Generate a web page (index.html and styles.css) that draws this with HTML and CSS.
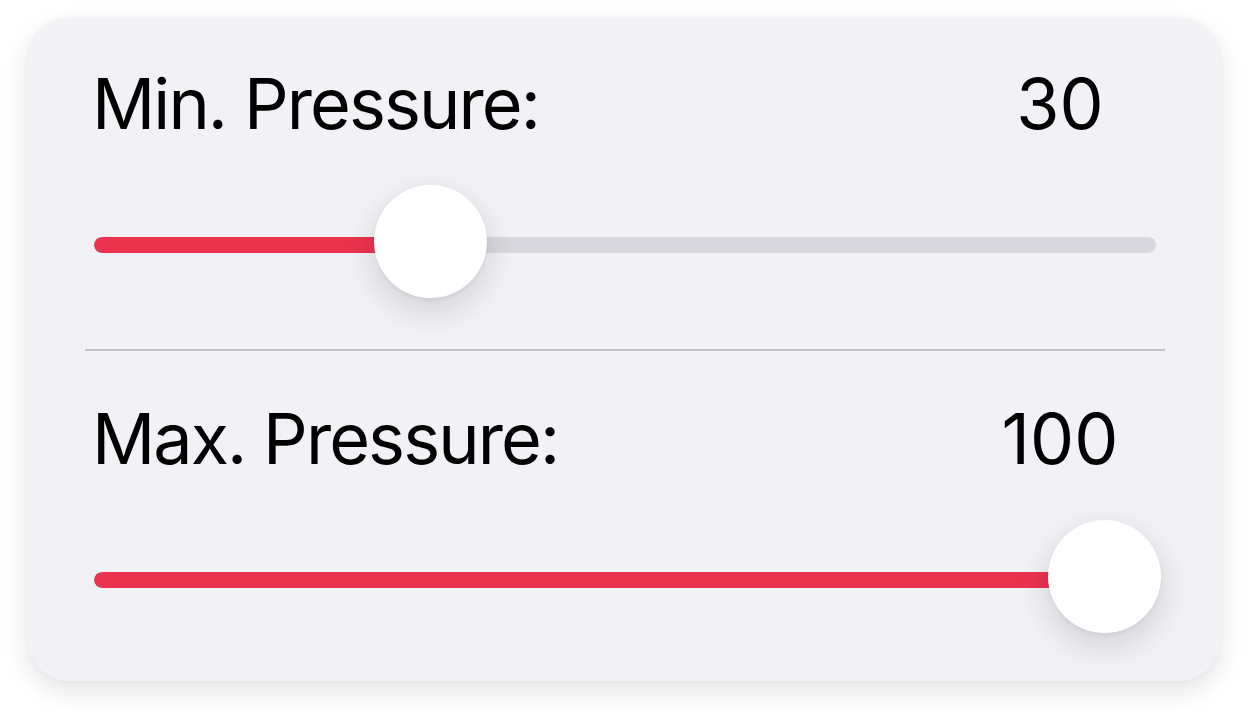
FILE: index.html
```html
<!DOCTYPE html>
<html>
<head>
<meta charset="utf-8">
<link rel="stylesheet" href="styles.css">
</head>
<body>
<div class="card">
  <div class="section first">
    <div class="row">
      <span class="label">Min. Pressure:</span>
      <span class="value">30</span>
    </div>
    <div class="slider">
      <div class="track"><div class="fill" style="width:336px"></div></div>
      <div class="thumb" style="left:336px"></div>
    </div>
  </div>
  <div class="divider"></div>
  <div class="section second">
    <div class="row">
      <span class="label">Max. Pressure:</span>
      <span class="value">100</span>
    </div>
    <div class="slider">
      <div class="track"><div class="fill" style="width:1010px"></div></div>
      <div class="thumb" style="left:1010px"></div>
    </div>
  </div>
</div>
</body>
</html>
```
FILE: styles.css
```css
html, body {
  margin: 0;
  padding: 0;
  background: #ffffff;
}
body {
  padding: 18px 27px 36px 27px;
  font-family: Inter, "Liberation Sans", sans-serif;
}
.card {
  width: 1194px;
  height: 663px;
  box-sizing: border-box;
  background: #f2f1f6;
  border-radius: 42px;
  box-shadow: 0 10px 28px rgba(0, 0, 0, 0.11), 0 0 4px rgba(0, 0, 0, 0.04);
  padding: 0 65px 0 67px;
  display: flex;
  flex-direction: column;
}
.section.first {
  padding-top: 50.5px;
}
.section.second {
  padding-top: 53.4px;
}
.row {
  display: flex;
  justify-content: space-between;
  align-items: flex-start;
  height: 70px;
}
.label {
  font-size: 70px;
  line-height: 70px;
  color: #000;
  margin-left: -2px;
  letter-spacing: -1.9px;
}
.value {
  width: 192px;
  text-align: center;
  font-size: 70px;
  line-height: 70px;
  color: #000;
}
.slider {
  position: relative;
  margin-top: 46.5px;
  height: 113px;
}
.track {
  position: absolute;
  left: 0;
  right: 0;
  top: 52px;
  height: 16px;
  border-radius: 8px;
  background: #d9d8de;
  overflow: hidden;
}
.fill {
  height: 100%;
  background: #ea334f;
  border-radius: 8px 0 0 8px;
}
.thumb {
  position: absolute;
  top: 0;
  width: 113px;
  height: 113px;
  margin-left: -56.5px;
  border-radius: 50%;
  background: #ffffff;
  box-shadow: 0 12px 34px rgba(0, 0, 0, 0.15), 0 2px 4px rgba(0, 0, 0, 0.05);
}
.divider {
  margin: 51px -9px 0 -9px;
  height: 1.5px;
  background: #c3c2c7;
}
```
